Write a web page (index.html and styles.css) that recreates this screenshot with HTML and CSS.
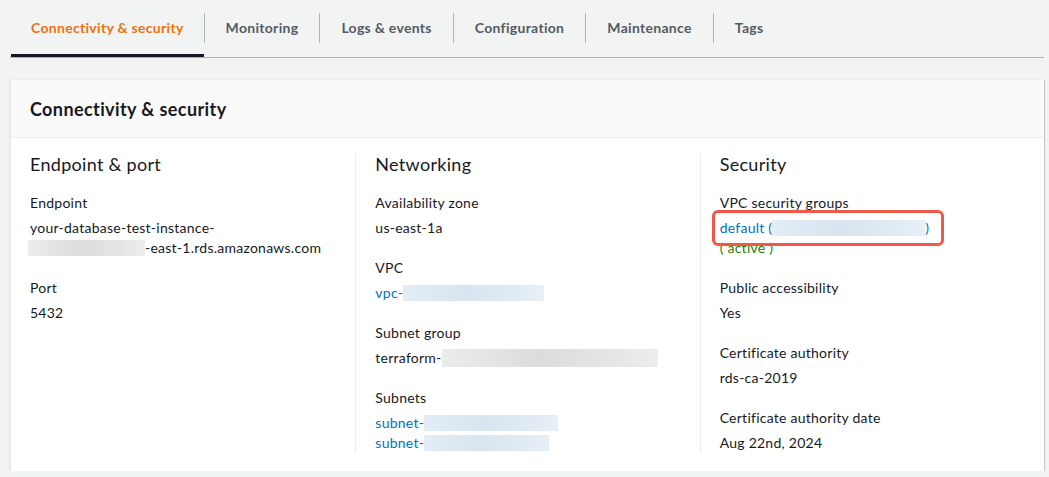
FILE: index.html
```html
<!DOCTYPE html>
<html>
<head>
<meta charset="utf-8">
<title>Database details</title>
<link rel="stylesheet" href="styles.css">
</head>
<body>
<div class="page">
    <div class="tabs">
        <div class="tab active"><span class="tab-label">Connectivity &amp; security</span></div>
        <div class="tab"><span class="tab-label">Monitoring</span></div>
        <div class="tab"><span class="tab-label">Logs &amp; events</span></div>
        <div class="tab"><span class="tab-label">Configuration</span></div>
        <div class="tab"><span class="tab-label">Maintenance</span></div>
        <div class="tab"><span class="tab-label">Tags</span></div>
    </div>

    <div class="card">
        <div class="card-header">
            <h2>Connectivity &amp; security</h2>
        </div>
        <div class="card-body">
            <div class="col">
                <h3>Endpoint &amp; port</h3>
                <div class="field">
                    <div class="label">Endpoint</div>
                    <div class="value">your-database-test-instance-<br><span class="blur gray endpoint-blur"></span>-east-1.rds.amazonaws.com</div>
                </div>
                <div class="field">
                    <div class="label">Port</div>
                    <div class="value">5432</div>
                </div>
            </div>
            <div class="col">
                <h3>Networking</h3>
                <div class="field">
                    <div class="label">Availability zone</div>
                    <div class="value">us-east-1a</div>
                </div>
                <div class="field">
                    <div class="label">VPC</div>
                    <div class="value"><a href="#">vpc-</a><span class="blur blue vpc-blur"></span></div>
                </div>
                <div class="field">
                    <div class="label">Subnet group</div>
                    <div class="value">terraform-<span class="blur gray group-blur"></span></div>
                </div>
                <div class="field">
                    <div class="label">Subnets</div>
                    <div class="value"><a href="#">subnet-</a><span class="blur blue subnet-blur"></span><br><a href="#">subnet-</a><span class="blur blue subnet-blur2"></span></div>
                </div>
            </div>
            <div class="col">
                <h3>Security</h3>
                <div class="field">
                    <div class="label">VPC security groups</div>
                    <div class="value highlighted">
                        <a href="#">default (</a><span class="blur blue sg-blur"></span><a href="#">)</a><br>
                        <span class="status">( active )</span>
                        <span class="callout"></span>
                    </div>
                </div>
                <div class="field">
                    <div class="label">Public accessibility</div>
                    <div class="value">Yes</div>
                </div>
                <div class="field">
                    <div class="label">Certificate authority</div>
                    <div class="value">rds-ca-2019</div>
                </div>
                <div class="field">
                    <div class="label">Certificate authority date</div>
                    <div class="value">Aug 22nd, 2024</div>
                </div>
            </div>
        </div>
    </div>
</div>
</body>
</html>
```

FILE: styles.css
```css
body, html {
    margin: 0;
    padding: 0;
    background-color: #f2f3f3;
    font-family: "Lato", "Liberation Sans", sans-serif;
    color: #16191f;
}
.page {
    padding: 0 5px 0 10px;
}
.tabs {
    display: flex;
    border-bottom: 1px solid #aab7b8;
}
.tab {
    padding: 13px 0 11px;
    border-bottom: 3px solid transparent;
}
.tab.active {
    border-bottom-color: #16191f;
    margin-left: 1px;
}
.tab-label {
    display: block;
    line-height: 30px;
    padding: 0 21px;
    border-left: 1px solid #aab7b8;
    font-size: 14px;
    font-weight: bold;
    letter-spacing: 0.3px;
    color: #545b64;
}
.tab.active .tab-label {
    border-left: none;
    padding: 0 20px;
    color: #ec7211;
}
.card {
    margin-top: 21px;
    background-color: white;
    border-top: 1px solid #eaeded;
    border-left: 1px solid #eaeded;
    box-shadow: 0 1px 1px 0 rgba(0, 28, 36, 0.3), 1px 1px 1px 0 rgba(0, 28, 36, 0.15);
}
.card-header {
    background-color: #fafafa;
    border-bottom: 1px solid #eaeded;
    padding: 18px 19px 17px;
}
.card-header h2 {
    margin: 0;
    font-size: 18px;
    line-height: 22px;
    font-weight: bold;
    letter-spacing: 0.4px;
}
.card-body {
    display: grid;
    grid-template-columns: 1fr 1fr 1fr;
    padding: 15px 0 18px;
}
.col {
    padding: 0 20px 0 19px;
}
.col + .col {
    border-left: 1px solid #eaeded;
}
h3 {
    margin: 0;
    font-size: 18px;
    line-height: 22px;
    font-weight: normal;
    letter-spacing: 0.3px;
}
.field {
    margin-top: 20px;
    font-size: 14px;
    line-height: 20px;
    letter-spacing: 0.25px;
}
h3 + .field {
    margin-top: 18px;
}
.label {
    margin-bottom: 5px;
}
a {
    color: #0073bb;
    text-decoration: none;
}
.status {
    color: #1d8102;
}
.blur {
    display: inline-block;
    height: 16px;
    vertical-align: -3px;
}
.blur.gray {
    background: linear-gradient(90deg, #ececec, #dcdcdc 45%, #e6e6e6 80%, #ededed);
}
.blur.blue {
    background: linear-gradient(90deg, #e3edf6, #d8e4ef 45%, #e1ebf4 80%, #e8f0f7);
}
.endpoint-blur {
    width: 117px;
    margin-left: -2px;
}
.vpc-blur {
    width: 141px;
}
.group-blur {
    width: 216px;
    height: 18px;
    vertical-align: -4px;
}
.subnet-blur {
    width: 134px;
}
.subnet-blur2 {
    width: 125px;
}
.sg-blur {
    width: 153px;
}
.highlighted {
    position: relative;
}
.callout {
    position: absolute;
    left: -8px;
    top: -8px;
    width: 232px;
    height: 36px;
    box-sizing: border-box;
    border: 3px solid #f0584a;
    border-radius: 6px;
}
```
